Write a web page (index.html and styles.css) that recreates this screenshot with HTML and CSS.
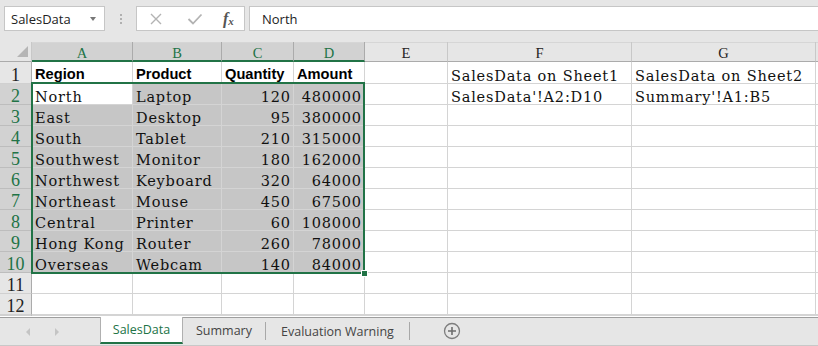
FILE: index.html
```html
<!DOCTYPE html>
<html>
<head>
<meta charset="utf-8">
<link rel="stylesheet" href="styles.css">
</head>
<body>
<div class="toolbar">
  <div class="namebox"><span>SalesData</span><i class="caret"></i></div>
  <div class="grip"><i></i><i></i><i></i></div>
  <div class="fxbox">
    <svg class="ic" width="14" height="14" viewBox="0 0 14 14"><path d="M2 2 L12 12 M12 2 L2 12" stroke="#b3b3b3" stroke-width="1.4" fill="none"/></svg>
    <svg class="ic" width="16" height="14" viewBox="0 0 16 14"><path d="M1.5 7 L6 11.5 L14.5 2.5" stroke="#b3b3b3" stroke-width="1.8" fill="none"/></svg>
    <span class="fx">f<sub>x</sub></span>
  </div>
  <div class="formula">North</div>
</div>

<div class="sheet">
  <div class="grid">
    <div class="corner"><i></i></div>
    <div class="ch sel">A</div><div class="ch sel">B</div><div class="ch sel">C</div><div class="ch sel">D</div>
    <div class="ch">E</div><div class="ch">F</div><div class="ch">G</div><div class="ch"></div>

    <div class="rh r1"><span>1</span></div>
    <div class="c r1"><b>Region</b></div><div class="c r1"><b>Product</b></div><div class="c r1"><b>Quantity</b></div><div class="c r1"><b>Amount</b></div>
    <div class="c r1"></div><div class="c r1"><span class="t">SalesData on Sheet1</span></div><div class="c r1"><span class="t">SalesData on Sheet2</span></div><div class="c r1"></div>

    <div class="rh sel"><span>2</span></div>
    <div class="c"><span class="t">North</span></div><div class="c s"><span class="t">Laptop</span></div><div class="c s n"><span class="t">120</span></div><div class="c s n"><span class="t">480000</span></div>
    <div class="c"></div><div class="c"><span class="t">SalesData'!A2:D10</span></div><div class="c"><span class="t">Summary'!A1:B5</span></div><div class="c"></div>

    <div class="rh sel"><span>3</span></div>
    <div class="c s"><span class="t">East</span></div><div class="c s"><span class="t">Desktop</span></div><div class="c s n"><span class="t">95</span></div><div class="c s n"><span class="t">380000</span></div>
    <div class="c"></div><div class="c"></div><div class="c"></div><div class="c"></div>

    <div class="rh sel"><span>4</span></div>
    <div class="c s"><span class="t">South</span></div><div class="c s"><span class="t">Tablet</span></div><div class="c s n"><span class="t">210</span></div><div class="c s n"><span class="t">315000</span></div>
    <div class="c"></div><div class="c"></div><div class="c"></div><div class="c"></div>

    <div class="rh sel"><span>5</span></div>
    <div class="c s"><span class="t">Southwest</span></div><div class="c s"><span class="t">Monitor</span></div><div class="c s n"><span class="t">180</span></div><div class="c s n"><span class="t">162000</span></div>
    <div class="c"></div><div class="c"></div><div class="c"></div><div class="c"></div>

    <div class="rh sel"><span>6</span></div>
    <div class="c s"><span class="t">Northwest</span></div><div class="c s"><span class="t">Keyboard</span></div><div class="c s n"><span class="t">320</span></div><div class="c s n"><span class="t">64000</span></div>
    <div class="c"></div><div class="c"></div><div class="c"></div><div class="c"></div>

    <div class="rh sel"><span>7</span></div>
    <div class="c s"><span class="t">Northeast</span></div><div class="c s"><span class="t">Mouse</span></div><div class="c s n"><span class="t">450</span></div><div class="c s n"><span class="t">67500</span></div>
    <div class="c"></div><div class="c"></div><div class="c"></div><div class="c"></div>

    <div class="rh sel"><span>8</span></div>
    <div class="c s"><span class="t">Central</span></div><div class="c s"><span class="t">Printer</span></div><div class="c s n"><span class="t">60</span></div><div class="c s n"><span class="t">108000</span></div>
    <div class="c"></div><div class="c"></div><div class="c"></div><div class="c"></div>

    <div class="rh sel"><span>9</span></div>
    <div class="c s"><span class="t">Hong Kong</span></div><div class="c s"><span class="t">Router</span></div><div class="c s n"><span class="t">260</span></div><div class="c s n"><span class="t">78000</span></div>
    <div class="c"></div><div class="c"></div><div class="c"></div><div class="c"></div>

    <div class="rh sel"><span>10</span></div>
    <div class="c s"><span class="t">Overseas</span></div><div class="c s"><span class="t">Webcam</span></div><div class="c s n"><span class="t">140</span></div><div class="c s n"><span class="t">84000</span></div>
    <div class="c"></div><div class="c"></div><div class="c"></div><div class="c"></div>

    <div class="rh"><span>11</span></div>
    <div class="c"></div><div class="c"></div><div class="c"></div><div class="c"></div>
    <div class="c"></div><div class="c"></div><div class="c"></div><div class="c"></div>

    <div class="rh"><span>12</span></div>
    <div class="c"></div><div class="c"></div><div class="c"></div><div class="c"></div>
    <div class="c"></div><div class="c"></div><div class="c"></div><div class="c"></div>

    <div class="rh"></div>
    <div class="c"></div><div class="c"></div><div class="c"></div><div class="c"></div>
    <div class="c"></div><div class="c"></div><div class="c"></div><div class="c"></div>
  </div>
  <div class="selection"><i class="handle"></i></div>
</div>

<div class="tabs">
  <div class="nav">
    <svg width="8" height="10" viewBox="0 0 8 10"><path d="M6 1 L2 5 L6 9 Z" fill="#c4c4c4"/></svg>
    <svg width="8" height="10" viewBox="0 0 8 10"><path d="M2 1 L6 5 L2 9 Z" fill="#c4c4c4"/></svg>
  </div>
  <div class="tab active">SalesData</div>
  <div class="tab t2">Summary</div>
  <div class="tab t3">Evaluation Warning</div>
  <div class="add">
    <svg width="18" height="18" viewBox="0 0 18 18"><circle cx="9" cy="9" r="7.5" fill="none" stroke="#7d7d7d" stroke-width="1.3"/><path d="M9 5 V13 M5 9 H13" stroke="#6e6e6e" stroke-width="1.6"/></svg>
  </div>
</div>
</body>
</html>
```

FILE: styles.css
```css
* { box-sizing: border-box; }
html, body { margin: 0; padding: 0; }
body {
  width: 818px;
  height: 346px;
  overflow: hidden;
  background: #e6e6e6;
  font-family: "Open Sans", "Noto Sans", sans-serif;
}

/* toolbar */
.toolbar {
  height: 42px;
  padding: 6px 0 0 4px;
  display: flex;
  align-items: flex-start;
}
.namebox {
  width: 101px;
  height: 25px;
  background: #fff;
  border: 1px solid #c6c6c6;
  display: flex;
  align-items: center;
  justify-content: space-between;
  padding: 0 8px 0 6px;
  font-size: 13px;
  color: #222;
}
.caret {
  width: 0; height: 0;
  border-left: 3.5px solid transparent;
  border-right: 3.5px solid transparent;
  border-top: 4px solid #777;
}
.grip {
  width: 31px;
  height: 25px;
  display: flex;
  flex-direction: column;
  align-items: center;
  justify-content: center;
  gap: 2px;
}
.grip i { width: 2px; height: 2px; background: #b0b0b0; display: block; }
.fxbox {
  width: 109px;
  height: 25px;
  background: #fff;
  border: 1px solid #c6c6c6;
  display: flex;
  align-items: center;
  padding-left: 12px;
}
.fxbox .ic { display: block; }
.fxbox .ic:first-child { margin-right: 24px; }
.fx {
  margin-left: 20px;
  font-family: "Liberation Serif", serif;
  font-style: italic;
  font-weight: bold;
  font-size: 16px;
  color: #555;
  line-height: 1;
}
.fx sub { font-size: 11px; vertical-align: -1px; }
.formula {
  margin-left: 4px;
  flex: 1;
  height: 25px;
  background: #fff;
  border: 1px solid #c6c6c6;
  border-right: none;
  display: flex;
  align-items: center;
  padding-left: 12px;
  font-size: 13px;
  color: #222;
}

/* sheet */
.sheet {
  position: relative;
  height: 275px;
  overflow: hidden;
  background: #fff;
}
.grid {
  display: grid;
  grid-template-columns: 32px 101px 89px 72px 71px 83px 184px 184px 1fr;
  grid-template-rows: 20px 22px repeat(11, 21px);
}
.corner {
  background: #e6e6e6;
  border-right: 1px solid #c8c8c8;
  border-bottom: 1px solid #ababab;
  position: relative;
}
.corner i {
  position: absolute;
  right: 3px;
  bottom: 4px;
  width: 0; height: 0;
  border-left: 11px solid transparent;
  border-bottom: 11px solid #b5b5b5;
}
.ch {
  background: #e6e6e6;
  border-right: 1px solid #c8c8c8;
  border-bottom: 1px solid #ababab;
  box-shadow: inset 0 1px 0 #d6d6d6;
  display: flex;
  align-items: flex-end;
  justify-content: center;
  font-family: "Liberation Serif", serif;
  font-size: 14.5px;
  line-height: 13px;
  color: #222;
  padding-bottom: 1px;
}
.ch.sel {
  background: #d2d2d2;
  color: #217346;
  border-bottom: 2px solid #217346;
  border-right-color: #ababab;
  padding-bottom: 0;
}
.rh {
  background: #e6e6e6;
  border-right: 1px solid #ababab;
  border-bottom: 1px solid #d0d0d0;
  display: flex;
  align-items: flex-end;
  justify-content: center;
  font-family: "Liberation Serif", serif;
  font-size: 18px;
  line-height: 16px;
  color: #222;
}
.rh.sel { background: #d2d2d2; color: #217346; border-bottom-color: #bdbdbd; }
.c {
  border-right: 1px solid #d4d4d4;
  border-bottom: 1px solid #d4d4d4;
  display: flex;
  align-items: flex-end;
  padding-left: 3px;
  white-space: nowrap;
  color: #000;
}
.c.s { background: #c6c6c6; }
.c.n { justify-content: flex-end; padding-left: 0; padding-right: 3px; }
.c.n .t { margin-right: -0.8px; }
.c b {
  font-family: "Liberation Sans", Arial, sans-serif;
  font-size: 14.67px;
  line-height: 17px;
  font-weight: bold;
}
.t {
  font-family: "DejaVu Serif", serif;
  font-size: 14.5px;
  letter-spacing: 0.8px;
  line-height: 13px;
  color: #111;
}
.selection {
  position: absolute;
  left: 31px;
  top: 40px;
  width: 334px;
  height: 192px;
  border: 2px solid #217346;
  pointer-events: none;
}
.handle {
  position: absolute;
  right: -5px;
  bottom: -5px;
  width: 7px;
  height: 7px;
  background: #217346;
  border: 1px solid #fff;
  display: block;
}

/* tabs */
.tabs {
  height: 29px;
  border-top: 1px solid #9e9e9e;
  border-bottom: 1px solid #c8c8c8;
  display: flex;
  align-items: stretch;
  font-size: 12.5px;
  color: #444;
}
.nav {
  width: 100px;
  display: flex;
  align-items: center;
  padding-left: 24px;
  gap: 21px;
}
.nav svg { display: block; }
.tab {
  display: flex;
  align-items: center;
  justify-content: center;
  padding-bottom: 2px;
}
.tab.active {
  width: 83px;
  background: #fff;
  color: #217346;
  border-left: 1px solid #b0b0b0;
  border-right: 1px solid #b0b0b0;
  border-bottom: 2px solid #217346;
  margin-top: -1px;
  margin-bottom: 1px;
  padding-bottom: 0;
}
.tab.t2 { width: 82px; }
.tab.t3 { width: 145px; border-left: 1px solid #a8a8a8; border-right: 1px solid #a8a8a8; margin: 4px 0 5px; padding-bottom: 0; }
.add {
  display: flex;
  align-items: center;
  padding-left: 33px;
  padding-bottom: 1px;
}
.add svg { display: block; }
```
